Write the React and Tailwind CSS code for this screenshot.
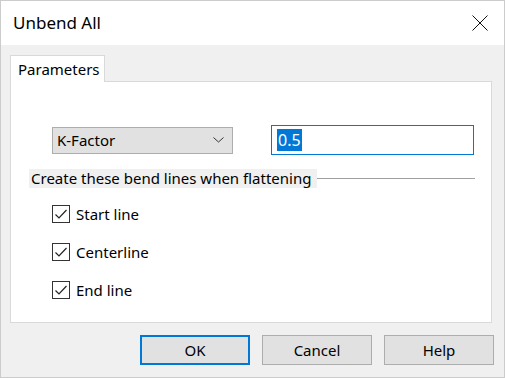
import React, { useState } from 'react';

const font = { fontFamily: '"Noto Sans", "Open Sans", Arial, sans-serif' };

function CheckRow({ label, checked, onToggle }) {
  return (
    <label className="flex items-center h-[18px] cursor-default" onClick={onToggle}>
      <span className="w-[18px] h-[18px] border border-[#333333] bg-white flex items-center justify-center">
        {checked && (
          <svg width="16" height="16" viewBox="0 0 16 16" fill="none">
            <path d="M2.5 8.5 L6 12 L13.5 4" stroke="#222" strokeWidth="1.2" />
          </svg>
        )}
      </span>
      <span className="ml-[6px] text-[15px] text-black leading-none">{label}</span>
    </label>
  );
}

export default function App() {
  const [lines, setLines] = useState({ start: true, center: true, end: true });
  const [kfactor, setKfactor] = useState('0.5');

  const toggle = (key) => setLines({ ...lines, [key]: !lines[key] });

  return (
    <div
      className="w-[505px] h-[378px] border border-[#cccccc] bg-[#f0f0f0] flex flex-col select-none"
      style={font}
    >
      {/* title bar */}
      <div className="h-[44px] bg-white flex items-center justify-between pl-[12px] pr-[16px]">
        <span className="text-[17px] text-black">Unbend All</span>
        <svg width="16" height="16" viewBox="0 0 16 16" fill="none">
          <path d="M0.5 0.5 L15.5 15.5 M15.5 0.5 L0.5 15.5" stroke="#111" strokeWidth="1" />
        </svg>
      </div>

      <div className="flex-1 pl-[9px] pr-[12px] pt-[10px]">
        {/* tab */}
        <div className="relative z-10 -mb-px w-[95px] h-[27px] bg-white border border-b-0 border-[#d9d9d9] flex items-center pl-[7px]">
          <span className="text-[15px] text-black">Parameters</span>
        </div>

        {/* tab panel */}
        <div className="h-[242px] bg-white border border-[#d9d9d9]">
          <div className="flex items-center pt-[43px] pl-[41px]">
            <div className="w-[181px] h-[27px] bg-[#e1e1e1] border border-[#adadad] flex items-center justify-between pl-[4px] pr-[8px]">
              <span className="text-[15px] text-black">K-Factor</span>
              <svg width="11" height="6" viewBox="0 0 11 6" fill="none">
                <path d="M0.5 0.5 L5.5 5 L10.5 0.5" stroke="#333" strokeWidth="1" />
              </svg>
            </div>
            <div className="ml-[38px] w-[203px] h-[30px] border border-[#0078d7] bg-white flex items-center pl-[5px]">
              <input
                value={kfactor}
                onChange={(e) => setKfactor(e.target.value)}
                className="hidden"
              />
              <span className="text-[16px] leading-[22px] bg-[#0078d7] text-white px-px">{kfactor}</span>
            </div>
          </div>

          {/* group header */}
          <div className="flex items-center mt-[14px] pl-[18px] pr-[16px]">
            <span className="bg-[#f0f0f0] h-[19px] leading-[19px] text-[15px] text-black pl-[2px] pr-[6px]">
              Create these bend lines when flattening
            </span>
            <div className="flex-1 h-px bg-[#a0a0a0]" />
          </div>

          <div className="flex flex-col gap-[20px] pl-[41px] mt-[17px]">
            <CheckRow label="Start line" checked={lines.start} onToggle={() => toggle('start')} />
            <CheckRow label="Centerline" checked={lines.center} onToggle={() => toggle('center')} />
            <CheckRow label="End line" checked={lines.end} onToggle={() => toggle('end')} />
          </div>
        </div>

        {/* buttons */}
        <div className="flex justify-end gap-[12px] mt-[12px] -mr-[2px]">
          <button className="w-[110px] h-[30px] bg-[#e1e1e1] border-2 border-[#0078d7] text-[15px] text-black">
            OK
          </button>
          <button className="w-[110px] h-[30px] bg-[#e1e1e1] border border-[#adadad] text-[15px] text-black">
            Cancel
          </button>
          <button className="w-[110px] h-[30px] bg-[#e1e1e1] border border-[#adadad] text-[15px] text-black">
            Help
          </button>
        </div>
      </div>
    </div>
  );
}
